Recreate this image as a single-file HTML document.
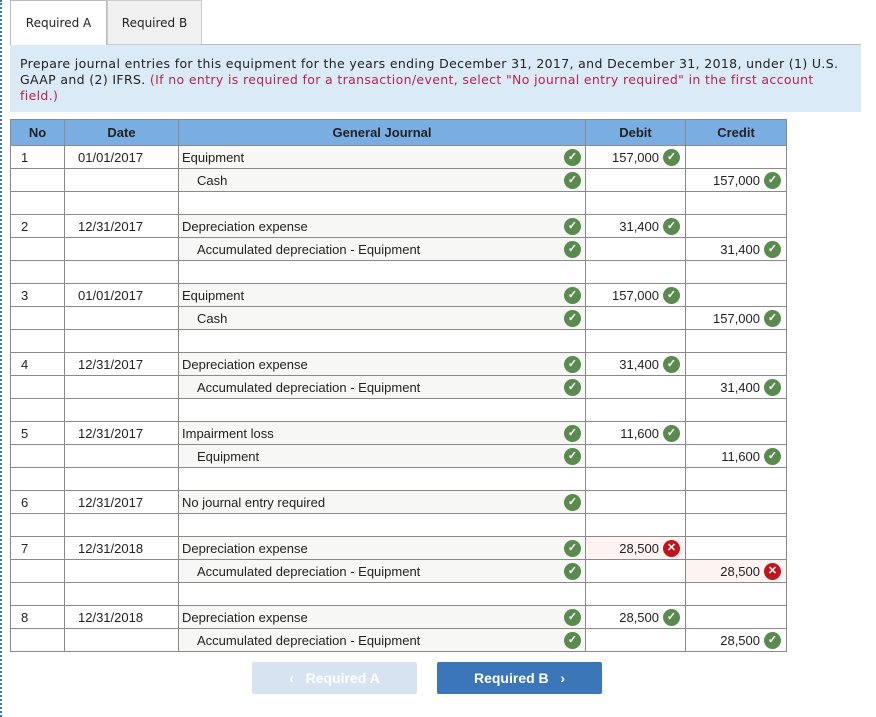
<!DOCTYPE html>
<html><head><style>
body{margin:0;width:876px;height:717px;background:#fff;font-family:"Liberation Sans",Arial,sans-serif;position:relative;overflow:hidden}
.dots{position:absolute;left:0;top:0;width:2px;height:717px;border-left:2px dotted #3a72c4}
.tab{position:absolute;top:0;height:44px;font-family:"DejaVu Sans",Verdana,sans-serif;font-size:12px;line-height:44px;text-align:center;color:#222}
.box{position:absolute;left:10px;top:45px;width:851px;height:67px;background:#daeaf7;font-family:"DejaVu Sans",Verdana,sans-serif;font-size:12.5px;line-height:16px;color:#222;padding:0;}
.box div{position:absolute;left:10px;top:11px;white-space:nowrap;letter-spacing:0.35px}
.r{color:#b3274a}
table{position:absolute;left:10px;top:119px;border-collapse:collapse;font-size:13px;color:#222}
td,th{border:1px solid #8a8a8a;height:22px;padding:0;position:relative}
th{background:#7aaee3;height:25px;font-weight:bold;font-size:13px}
td.j{background:#f7f8f5;padding-left:3px}
td.j.i{padding-left:18px}
.n{padding-left:10px}.d{padding-left:13px}
.num{text-align:right;padding-right:26px}
.ok,.x{position:absolute;width:17px;height:17px;border-radius:50%;top:3px;right:5px;background:#5a8a4f;color:#fff;font-size:11px;line-height:17px;text-align:center;font-weight:bold}
.x{background:#c0151c}
td.j .ok{right:4px}
.bad{background:#fdf3f1}
.btn{position:absolute;top:662px;height:32px;width:165px;border-radius:2px;color:#fff;font-weight:bold;font-size:14px;line-height:32px;text-align:center}
</style></head><body>
<div class="dots"></div>
<div class="tab" style="left:10px;width:95px;border:1px solid #bbb;border-bottom:none;background:#fff">Required A</div>
<div class="tab" style="left:107px;width:93px;border:1px solid #ccc;background:#f0f0f0;height:43px">Required B</div>
<div style="position:absolute;left:200px;top:44px;width:661px;border-top:1px solid #bbb"></div>
<div class="box"><div>Prepare journal entries for this equipment for the years ending December 31, 2017, and December 31, 2018, under (1) U.S.<br>GAAP and (2) IFRS. <span class="r">(If no entry is required for a transaction/event, select "No journal entry required" in the first account<br>field.)</span></div></div>
<table>
<colgroup><col style="width:54px"><col style="width:114px"><col style="width:407px"><col style="width:100px"><col style="width:101px"></colgroup>
<tr><th>No</th><th>Date</th><th>General Journal</th><th>Debit</th><th>Credit</th></tr>
<tr><td class="n">1</td><td class="d">01/01/2017</td><td class="j">Equipment<span class="ok">✓</span></td><td class="num">157,000<span class="ok">✓</span></td><td></td></tr>
<tr><td></td><td></td><td class="j i">Cash<span class="ok">✓</span></td><td></td><td class="num">157,000<span class="ok">✓</span></td></tr>
<tr><td></td><td></td><td></td><td></td><td></td></tr>
<tr><td class="n">2</td><td class="d">12/31/2017</td><td class="j">Depreciation expense<span class="ok">✓</span></td><td class="num">31,400<span class="ok">✓</span></td><td></td></tr>
<tr><td></td><td></td><td class="j i">Accumulated depreciation - Equipment<span class="ok">✓</span></td><td></td><td class="num">31,400<span class="ok">✓</span></td></tr>
<tr><td></td><td></td><td></td><td></td><td></td></tr>
<tr><td class="n">3</td><td class="d">01/01/2017</td><td class="j">Equipment<span class="ok">✓</span></td><td class="num">157,000<span class="ok">✓</span></td><td></td></tr>
<tr><td></td><td></td><td class="j i">Cash<span class="ok">✓</span></td><td></td><td class="num">157,000<span class="ok">✓</span></td></tr>
<tr><td></td><td></td><td></td><td></td><td></td></tr>
<tr><td class="n">4</td><td class="d">12/31/2017</td><td class="j">Depreciation expense<span class="ok">✓</span></td><td class="num">31,400<span class="ok">✓</span></td><td></td></tr>
<tr><td></td><td></td><td class="j i">Accumulated depreciation - Equipment<span class="ok">✓</span></td><td></td><td class="num">31,400<span class="ok">✓</span></td></tr>
<tr><td></td><td></td><td></td><td></td><td></td></tr>
<tr><td class="n">5</td><td class="d">12/31/2017</td><td class="j">Impairment loss<span class="ok">✓</span></td><td class="num">11,600<span class="ok">✓</span></td><td></td></tr>
<tr><td></td><td></td><td class="j i">Equipment<span class="ok">✓</span></td><td></td><td class="num">11,600<span class="ok">✓</span></td></tr>
<tr><td></td><td></td><td></td><td></td><td></td></tr>
<tr><td class="n">6</td><td class="d">12/31/2017</td><td class="j">No journal entry required<span class="ok">✓</span></td><td></td><td></td></tr>
<tr><td></td><td></td><td></td><td></td><td></td></tr>
<tr><td class="n">7</td><td class="d">12/31/2018</td><td class="j">Depreciation expense<span class="ok">✓</span></td><td class="num bad">28,500<span class="x">✕</span></td><td></td></tr>
<tr><td></td><td></td><td class="j i">Accumulated depreciation - Equipment<span class="ok">✓</span></td><td></td><td class="num bad">28,500<span class="x">✕</span></td></tr>
<tr><td></td><td></td><td></td><td></td><td></td></tr>
<tr><td class="n">8</td><td class="d">12/31/2018</td><td class="j">Depreciation expense<span class="ok">✓</span></td><td class="num">28,500<span class="ok">✓</span></td><td></td></tr>
<tr><td></td><td></td><td class="j i">Accumulated depreciation - Equipment<span class="ok">✓</span></td><td></td><td class="num">28,500<span class="ok">✓</span></td></tr>
</table>
<div class="btn" style="left:252px;background:#d8e3f1">‹&nbsp;&nbsp; Required A</div>
<div class="btn" style="left:437px;background:#3b76b8">Required B &nbsp;&nbsp;›</div>
</body></html>
